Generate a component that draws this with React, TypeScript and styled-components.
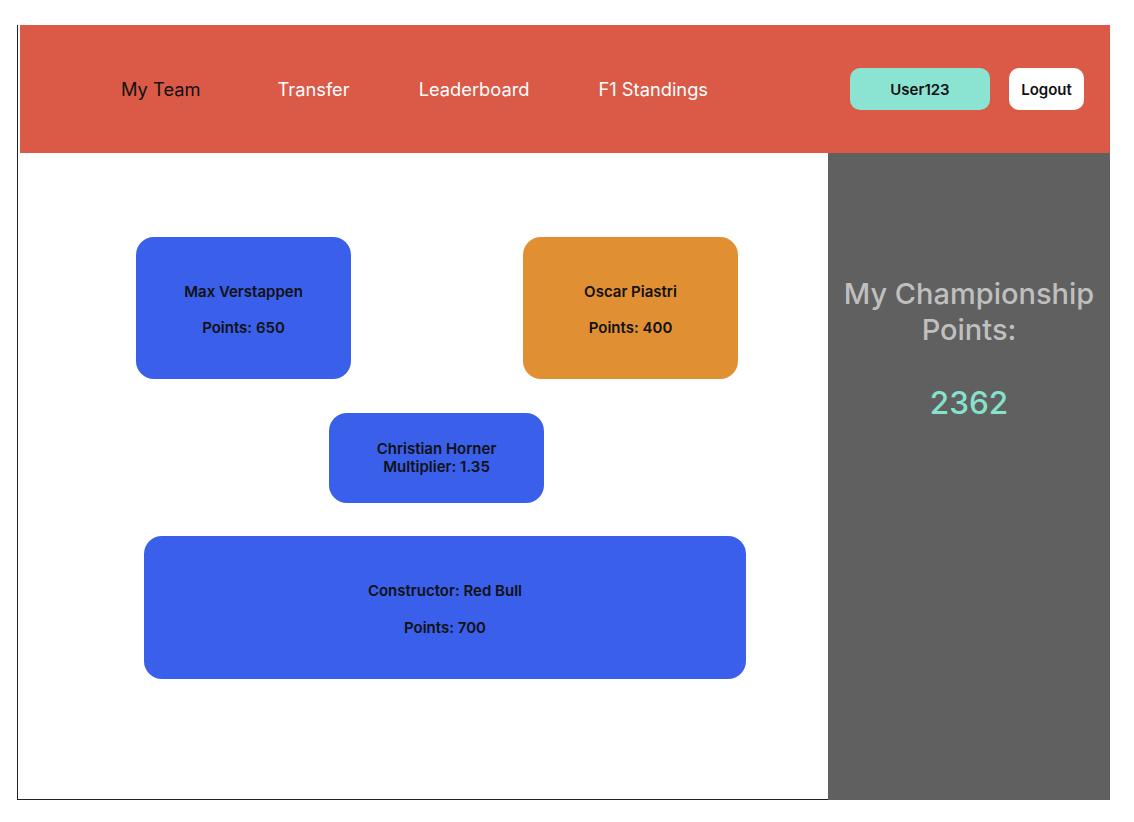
import { FC } from 'react';
import styled, { createGlobalStyle } from 'styled-components';

const GlobalStyle = createGlobalStyle`
	html, body {
		margin: 0;
		padding: 0;
		background: #ffffff;
		font-family: Inter, 'Noto Sans', 'Liberation Sans', sans-serif;
	}
`;

interface Driver {
	name: string;
	points: number;
	team: 'redbull' | 'mclaren';
}

const drivers: Driver[] = [
	{ name: 'Max Verstappen', points: 650, team: 'redbull' },
	{ name: 'Oscar Piastri', points: 400, team: 'mclaren' },
];

const navLinks = ['My Team', 'Transfer', 'Leaderboard', 'F1 Standings'];

const App: FC = () => {
	return (
		<>
			<GlobalStyle />
			<Frame>
				<Header>
					<Nav>
						{navLinks.map((link, i) => (
							<NavLink key={link} $active={i === 0}>
								{link}
							</NavLink>
						))}
					</Nav>
					<Actions>
						<UserButton>User123</UserButton>
						<LogoutButton>Logout</LogoutButton>
					</Actions>
				</Header>
				<Body>
					<Main>
						<DriverRow>
							{drivers.map((d) => (
								<Card key={d.name} $team={d.team} $size='driver'>
									<CardLine>{d.name}</CardLine>
									<CardLine>Points: {d.points}</CardLine>
								</Card>
							))}
						</DriverRow>
						<PrincipalRow>
							<Card $team='redbull' $size='principal'>
								<CardLine>Christian Horner</CardLine>
								<CardLine>Multiplier: 1.35</CardLine>
							</Card>
						</PrincipalRow>
						<ConstructorRow>
							<Card $team='redbull' $size='constructor'>
								<CardLine>Constructor: Red Bull</CardLine>
								<CardLine>Points: 700</CardLine>
							</Card>
						</ConstructorRow>
					</Main>
					<Sidebar>
						<SidebarTitle>
							My Championship
							<br />
							Points:
						</SidebarTitle>
						<Total>2362</Total>
					</Sidebar>
				</Body>
			</Frame>
		</>
	);
};

export default App;

const Frame = styled.div`
	margin: 25px 0 0 17px;
	width: 1093px;
	height: 775px;
	box-sizing: border-box;
	border-left: 1px solid #222;
	border-bottom: 1px solid #222;
	display: flex;
	flex-direction: column;
`;

const Header = styled.header`
	height: 128px;
	margin-left: 2px;
	background: #da5a47;
	display: flex;
	align-items: center;
	justify-content: space-between;
	padding: 0 26px 0 101px;
	box-sizing: border-box;
	flex-shrink: 0;
`;

const Nav = styled.nav`
	display: flex;
	align-items: center;
	gap: 69px;
`;

const NavLink = styled.a<{ $active?: boolean }>`
	font-size: 18.3px;
	line-height: 24px;
	color: ${({ $active }) => ($active ? '#111' : '#fff')};
	cursor: pointer;
	&:first-child {
		margin-right: 8px;
	}
`;

const Actions = styled.div`
	display: flex;
	align-items: center;
	gap: 19px;
`;

const HeaderButton = styled.button`
	height: 42px;
	border: none;
	border-radius: 10px;
	font-family: inherit;
	font-size: 15px;
	font-weight: 600;
	color: #111;
	cursor: pointer;
`;

const UserButton = styled(HeaderButton)`
	width: 140px;
	background: #8be3d1;
`;

const LogoutButton = styled(HeaderButton)`
	width: 75px;
	background: #fff;
`;

const Body = styled.div`
	flex: 1;
	display: flex;
	min-height: 0;
`;

const Main = styled.main`
	flex: 1;
	display: flex;
	flex-direction: column;
	padding-top: 84px;
`;

const DriverRow = styled.div`
	width: 602px;
	margin-left: 118px;
	display: flex;
	justify-content: space-between;
`;

const PrincipalRow = styled.div`
	margin: 34px 0 0 311px;
`;

const ConstructorRow = styled.div`
	margin: 33px 0 0 126px;
`;

const sizes = {
	driver: { w: 215, h: 142, gap: 18, pad: 3 },
	principal: { w: 215, h: 90, gap: 0, pad: 0 },
	constructor: { w: 602, h: 143, gap: 19, pad: 3 },
};

const Card = styled.div<{ $team: 'redbull' | 'mclaren'; $size: keyof typeof sizes }>`
	width: ${({ $size }) => sizes[$size].w}px;
	height: ${({ $size }) => sizes[$size].h}px;
	box-sizing: border-box;
	padding-top: ${({ $size }) => sizes[$size].pad}px;
	border-radius: 18px;
	background: ${({ $team }) => ($team === 'redbull' ? '#3a5fea' : '#e08f33')};
	display: flex;
	flex-direction: column;
	align-items: center;
	justify-content: center;
	gap: ${({ $size }) => sizes[$size].gap}px;
`;

const CardLine = styled.p`
	margin: 0;
	font-size: 15px;
	line-height: 18px;
	font-weight: 600;
	color: #111;
`;

const Sidebar = styled.aside`
	width: 282px;
	background: #606060;
	display: flex;
	flex-direction: column;
	align-items: center;
	padding-top: 123px;
	box-sizing: border-box;
	margin-bottom: -1px;
`;

const SidebarTitle = styled.h2`
	margin: 0;
	font-size: 29px;
	line-height: 36px;
	font-weight: 500;
	color: #bfbfbf;
	text-align: center;
`;

const Total = styled.div`
	margin-top: 36px;
	font-size: 31.5px;
	line-height: 38px;
	font-weight: 500;
	color: #86e1cf;
`;
